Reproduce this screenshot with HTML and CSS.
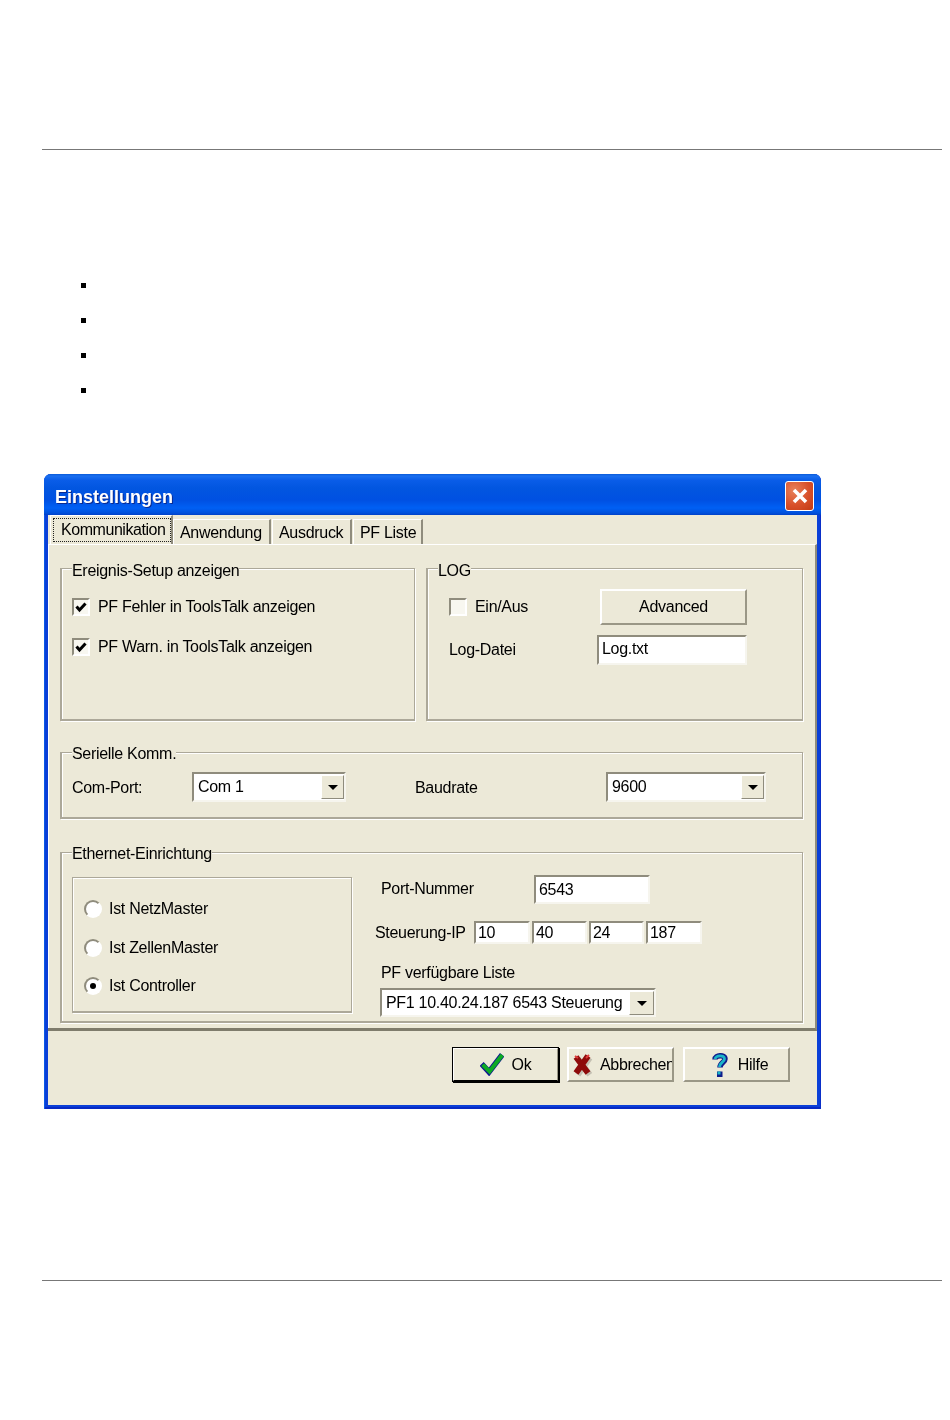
FILE: index.html
```html
<!DOCTYPE html>
<html lang="de">
<head>
<meta charset="utf-8">
<title>Einstellungen</title>
<link rel="stylesheet" href="styles.css">
</head>
<body>
<hr class="rule rule-top">
<ul class="bullets">
  <li></li>
  <li></li>
  <li></li>
  <li></li>
</ul>
<div class="dialog">
  <div class="titlebar">
    <span class="title">Einstellungen</span>
    <span class="close">
      <svg width="20" height="20" viewBox="0 0 20 20"><path d="M4 4 L16 16 M16 4 L4 16" stroke="#fff" stroke-width="3.6" fill="none"/></svg>
    </span>
  </div>
  <div class="client">
    <div class="tabs">
      <div class="tab tab-active"><span class="focus">Kommunikation</span></div>
      <div class="tab tab-w1">Anwendung</div>
      <div class="tab tab-w2">Ausdruck</div>
      <div class="tab tab-w3">PF Liste</div>
    </div>
    <div class="panel">
      <div class="row-top">
        <section class="group group-event">
          <span class="legend legend-low">Ereignis-Setup anzeigen</span>
          <label class="check-row"><span class="check"><svg width="14" height="14" viewBox="0 0 14 14"><path d="M2.500 6.500 L5.500 10 L11.500 3.500" stroke="#000" stroke-width="3" fill="none"/></svg></span>PF Fehler in ToolsTalk anzeigen</label>
          <label class="check-row"><span class="check"><svg width="14" height="14" viewBox="0 0 14 14"><path d="M2.500 6.500 L5.500 10 L11.500 3.500" stroke="#000" stroke-width="3" fill="none"/></svg></span>PF Warn. in ToolsTalk anzeigen</label>
        </section>
        <section class="group group-log">
          <span class="legend legend-low">LOG</span>
          <div class="log-grid">
            <label class="check-row"><span class="check"></span>Ein/Aus</label>
            <span class="btn btn-adv">Advanced</span>
            <span class="text">Log-Datei</span>
            <span class="field field-log">Log.txt</span>
          </div>
        </section>
      </div>
      <section class="group group-serial">
        <span class="legend">Serielle Komm.</span>
        <span class="text lbl-com">Com-Port:</span>
        <span class="field combo combo-com">Com 1<span class="drop"><i class="arrow"></i></span></span>
        <span class="text lbl-baud">Baudrate</span>
        <span class="field combo combo-baud">9600<span class="drop"><i class="arrow"></i></span></span>
      </section>
      <section class="group group-eth">
        <span class="legend">Ethernet-Einrichtung</span>
        <div class="radio-box">
          <label class="radio-row"><span class="radio"></span>Ist NetzMaster</label>
          <label class="radio-row"><span class="radio"></span>Ist ZellenMaster</label>
          <label class="radio-row"><span class="radio radio-on"></span>Ist Controller</label>
        </div>
        <div class="eth-right">
          <div class="port-row">
            <span class="text lbl-port">Port-Nummer</span>
            <span class="field field-port">6543</span>
          </div>
          <div class="ip-row">
            <span class="text lbl-ip">Steuerung-IP</span>
            <span class="field field-ip ip-wide">10</span>
            <span class="field field-ip">40</span>
            <span class="field field-ip">24</span>
            <span class="field field-ip ip-wide">187</span>
          </div>
          <span class="text lbl-list">PF verfügbare Liste</span>
          <span class="field combo combo-list">PF1 10.40.24.187 6543 Steuerung<span class="drop"><i class="arrow"></i></span></span>
        </div>
      </section>
    </div>
    <div class="footer">
      <span class="btn btn-foot btn-default">
        <svg class="ico" width="24" height="23" viewBox="0 0 24 23"><path d="M3.500 13 L9 19 L20.500 4" stroke="#0f1590" stroke-width="5.600" fill="none" stroke-linecap="square"/><path d="M4 13 L9.500 18.500 L21 3.500" stroke="#0cab24" stroke-width="4" fill="none" stroke-linecap="square"/></svg>
        Ok
      </span>
      <span class="btn btn-foot btn-abort">
        <svg class="ico" width="21" height="24" viewBox="0 0 21 24"><path d="M5 5 L17 21 M17 4 L5 21" stroke="#c4c0b2" stroke-width="6" fill="none" transform="translate(0.800 0.800)"/><path d="M4 4 L16 20 M16 3 L4 20" stroke="#8e0a0a" stroke-width="6" fill="none"/><path d="M3 3 L6 5 M17 2 L14 5" stroke="#e03a3a" stroke-width="2" fill="none"/></svg>
        Abbrechen
      </span>
      <span class="btn btn-foot btn-help">
        <svg class="ico" width="18" height="26" viewBox="0 0 18 26"><path d="M4 7.500 C4 3 14 2 14 7 C14 10.500 9 10.500 9 15.500" stroke="#0f1d8c" stroke-width="5.500" fill="none"/><path d="M4 7 C5 3 13.500 2.500 13.500 7 C13.500 10 8.500 10.500 8.500 15" stroke="#1bb6c8" stroke-width="2.800" fill="none"/><rect x="6" y="19.500" width="5.500" height="5.500" fill="#0f1d8c"/><rect x="6.500" y="19.500" width="3" height="3" fill="#1bb6c8"/></svg>
        Hilfe
      </span>
    </div>
  </div>
</div>
<hr class="rule rule-bottom">
</body>
</html>
```
FILE: styles.css
```css
* { box-sizing: border-box; }
html, body { margin: 0; padding: 0; background: #fff; }
body {
  font-family: "Liberation Sans", Arial, sans-serif;
  font-size: 16px;
  letter-spacing: -0.3px;
  color: #000;
  height: 1420px;
  overflow: hidden;
}
.rule {
  display: block;
  height: 1px;
  width: 900px;
  margin: 0 0 0 42px;
  border: 0;
  background: #777;
}
.rule-top { margin-top: 149px; }
.rule-bottom { margin-top: 171px; }

.bullets {
  list-style: none;
  margin: 133px 0 0 81px;
  padding: 0;
  display: flex;
  flex-direction: column;
  gap: 30px;
}
.bullets li {
  width: 5px;
  height: 5px;
  background: #000;
}

.dialog {
  width: 777px;
  height: 635px;
  margin: 81px 0 0 44px;
  background: #0a3fd8;
  border-radius: 7px 7px 0 0;
  display: flex;
  flex-direction: column;
  padding: 0 4px 4px;
  box-shadow: inset 1px 0 0 #0a5ae6, inset -1px 0 0 #0a2fc8, inset 0 -2px 0 #0729c4;
  filter: blur(0.3px);
}
.titlebar {
  height: 41px;
  margin: 0 -4px;
  padding: 8px 7px 0 11px;
  border-radius: 7px 7px 0 0;
  background: linear-gradient(to bottom, #0a5bd8 0, #1a6ff0 2px, #0a5de8 6px, #0256e0 14px, #0050e2 26px, #0060f4 34px, #0050dc 39px, #0040c8 41px);
  display: flex;
  justify-content: space-between;
}
.title {
  color: #fff;
  font-weight: 700;
  font-size: 18px;
  letter-spacing: 0;
  line-height: 30px;
  text-shadow: 1px 1px 0 #0a2a90;
}
.close {
  width: 29px;
  height: 30px;
  margin-top: -1px;
  border: 1px solid #fff;
  border-radius: 3px;
  background: radial-gradient(circle at 30% 30%, #e8815a, #d8502a 55%, #c23a14);
  display: flex;
  align-items: center;
  justify-content: center;
}
.client {
  flex: 1;
  background: #ece9d8;
  display: flex;
  flex-direction: column;
}

/* tabs */
.tabs {
  height: 29px;
  display: flex;
  align-items: flex-end;
  padding-left: 2px;
}
.tab {
  height: 25px;
  padding: 0 0 2px 7px;
  line-height: 25px;
  border-right: 2px solid #8f8c7d;
  border-top: 1px solid #fff;
  box-shadow: inset 1px 0 0 #fff;
  margin-right: 1px;
  white-space: nowrap;
}
.tab-active {
  width: 123px;
  height: 29px;
  padding: 2px 0 0 3px;
  margin-right: 0;
}
.focus {
  display: block;
  width: 118px;
  height: 24px;
  line-height: 22px;
  padding-left: 7px;
  border: 1px dotted #222;
  letter-spacing: -0.45px;
}
.tab-w1 { width: 98px; }
.tab-w2 { width: 80px; }
.tab-w3 { width: 70px; }

/* main panel */
.panel {
  height: 487px;
  padding: 23px 12px 0 12px;
  border-top: 1px solid #fff;
  border-right: 2px solid #8f8c7d;
  border-bottom: 3px solid #7f7c6c;
  box-shadow: inset 1px 0 0 #fff;
  display: flex;
  flex-direction: column;
}
.row-top {
  display: flex;
  gap: 11px;
  height: 153px;
}
.group {
  position: relative;
  border: 1px solid #aca899;
  border-left-width: 2px;
  border-bottom-width: 2px;
  box-shadow: 1px 1px 0 #fff, inset 1px 1px 0 #fff;
}
.legend {
  position: absolute;
  top: -8px;
  left: 10px;
  height: 18px;
  line-height: 18px;
  background: #ece9d8;
  white-space: nowrap;
}
.legend-low { top: -7px; }
.text { white-space: nowrap; line-height: 18px; }

.group-event {
  width: 355px;
  padding: 29px 0 0 10px;
  display: flex;
  flex-direction: column;
  gap: 22px;
}
.check-row {
  display: flex;
  align-items: center;
  gap: 8px;
  height: 18px;
  line-height: 18px;
  white-space: nowrap;
}
.check {
  width: 18px;
  height: 18px;
  flex: none;
  border: 2px solid;
  border-color: #8f8c7d #fff #fff #8f8c7d;
  background: #f8f7f0;
  display: flex;
  align-items: center;
  justify-content: center;
}
.group-log {
  width: 377px;
  padding: 20px 0 0 21px;
}
.log-grid {
  display: grid;
  grid-template-columns: 148px 150px;
  grid-template-rows: 36px 30px;
  row-gap: 10px;
  align-items: center;
}
.btn {
  display: flex;
  align-items: center;
  justify-content: center;
  background: #ece9d8;
  border: 2px solid;
  border-color: #fff #9a9786 #9a9786 #fff;
  white-space: nowrap;
}
.btn-adv { height: 36px; margin-left: 3px; }
.field {
  display: block;
  background: #fff;
  border: 2px solid;
  border-color: #8f8c7d #f6f5ee #f6f5ee #8f8c7d;
  padding-left: 3px;
  white-space: nowrap;
}
.field-log { height: 30px; line-height: 24px; }

.group-serial {
  height: 67px;
  margin-top: 31px;
  padding: 19px 0 0 10px;
  display: flex;
  align-items: flex-start;
}
.lbl-com { width: 120px; line-height: 32px; }
.lbl-baud { width: 191px; margin-left: 69px; line-height: 32px; }
.combo {
  position: relative;
  height: 30px;
  line-height: 26px;
  padding-left: 4px;
}
.combo-com { width: 154px; }
.combo-baud { width: 160px; }
.drop {
  position: absolute;
  top: 1px;
  right: 0;
  width: 23px;
  height: 24px;
  background: #ece9d8;
  border: 1px solid;
  border-color: #fff #8f8c7d #8f8c7d #fff;
  display: flex;
  align-items: center;
  justify-content: center;
}
.arrow {
  width: 0;
  height: 0;
  border-left: 5px solid transparent;
  border-right: 5px solid transparent;
  border-top: 5px solid #000;
}

.group-eth {
  height: 171px;
  margin-top: 33px;
  padding: 24px 0 0 10px;
  display: flex;
  align-items: flex-start;
}
.radio-box {
  width: 280px;
  height: 136px;
  padding: 22px 0 0 11px;
  border: 1px solid #aca899;
  border-bottom-width: 2px;
  box-shadow: 1px 1px 0 #fff, inset 1px 1px 0 #fff;
  display: flex;
  flex-direction: column;
  gap: 20.5px;
}
.radio-row {
  display: flex;
  align-items: center;
  gap: 7px;
  height: 18px;
  white-space: nowrap;
}
.radio {
  width: 18px;
  height: 18px;
  flex: none;
  border-radius: 50%;
  border: 2px solid;
  border-color: #8f8c7d #fff #fff #8f8c7d;
  background: #fff;
  display: flex;
  align-items: center;
  justify-content: center;
}
.radio-on::after {
  content: "";
  width: 6px;
  height: 6px;
  border-radius: 50%;
  background: #000;
}
.eth-right {
  margin: -2px 0 0 23px;
  display: flex;
  flex-direction: column;
}
.port-row {
  display: flex;
  align-items: center;
  padding-left: 6px;
}
.lbl-port { width: 153px; margin-top: -1px; }
.field-port { width: 116px; height: 29px; line-height: 25px; }
.ip-row {
  display: flex;
  align-items: center;
  margin-top: 17px;
  gap: 2px;
}
.lbl-ip { width: 97px; }
.field-ip { width: 55px; height: 23px; line-height: 19px; padding-left: 2px; }
.ip-wide { width: 56px; }
.lbl-list { margin: 20px 0 0 6px; }
.combo-list {
  width: 276px;
  height: 29px;
  margin: 6px 0 0 5px;
  line-height: 25px;
}
.combo-list .drop { width: 25px; height: 24px; }

/* footer */
.footer {
  flex: 1;
  display: flex;
  align-items: flex-start;
  padding: 16px 0 0 404px;
}
.btn-foot {
  width: 107px;
  height: 35px;
  margin-right: 8px;
  gap: 8px;
}
.btn-default {
  outline: 1px solid #000;
  outline-offset: -1px;
  border-color: #fff #9a9786 #000 #fff;
  box-shadow: 1px 1px 0 #000;
}
.btn-abort { justify-content: flex-start; padding-left: 3px; gap: 7px; overflow: hidden; }
.btn-help { margin-left: 1px; gap: 9px; padding-left: 6px; }
.ico { flex: none; }
```
